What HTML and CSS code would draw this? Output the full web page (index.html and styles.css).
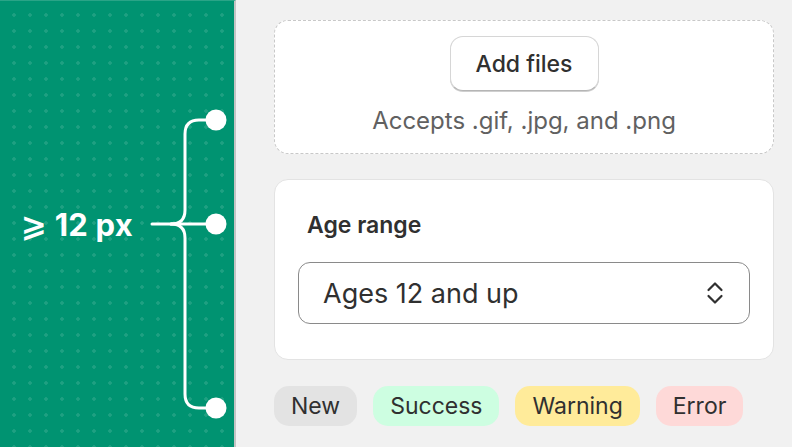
FILE: index.html
```html
<!DOCTYPE html>
<html lang="en">
<head>
  <meta charset="UTF-8" />
  <title>Spacing guide</title>
  <link rel="stylesheet" href="styles.css">
</head>
<body>
  <div class="guide">
    <div class="guide-label">⩾ 12 px</div>
    <svg class="brace" width="94" height="447" viewBox="0 0 94 447">
      <g fill="none" stroke="#fff" stroke-width="3" stroke-linecap="round">
        <path d="M12 224 H76" />
        <path d="M76 120 H59 Q45 120 45 134 V210 Q45 224 31 224" />
        <path d="M31 224 Q45 224 45 238 V394 Q45 408 59 408 H76" />
      </g>
      <g fill="#fff">
        <circle cx="76" cy="120" r="10.5" />
        <circle cx="76" cy="224" r="10.5" />
        <circle cx="76" cy="408" r="10.5" />
      </g>
    </svg>
  </div>

  <main class="preview">
    <div class="dropzone">
      <button class="btn">Add files</button>
      <p class="hint">Accepts .gif, .jpg, and .png</p>
    </div>

    <div class="card">
      <label class="field-label">Age range</label>
      <div class="select">
        <span>Ages 12 and up</span>
        <svg class="chevrons" width="20" height="28" viewBox="0 0 20 28">
          <path d="M3.5 11 L10 4.5 L16.5 11 M3.5 17 L10 23.5 L16.5 17" fill="none" stroke="#303030" stroke-width="2.2" stroke-linecap="round" stroke-linejoin="round" />
        </svg>
      </div>
    </div>

    <div class="badges">
      <span class="badge">New</span>
      <span class="badge success">Success</span>
      <span class="badge warning">Warning</span>
      <span class="badge error">Error</span>
    </div>
  </main>
</body>
</html>
```

FILE: styles.css
```css
body {
  margin: 0;
  font-family: 'Inter', 'DejaVu Sans', sans-serif;
  background: #f1f1f1;
  color: #303030;
  display: flex;
  height: 447px;
  overflow: hidden;
}

.guide {
  width: 236px;
  height: 447px;
  flex-shrink: 0;
  display: flex;
  align-items: center;
  background-color: #009371;
  background-image: radial-gradient(circle, rgba(255,255,255,0.12) 1.5px, transparent 2px);
  background-size: 16px 16px;
  background-position: 6px 6px;
  border-right: 2px solid #c4c4c4;
  border-top: 1px solid #2aa487;
  box-sizing: border-box;
}
.guide-label {
  width: 140px;
  flex-shrink: 0;
  padding-left: 21px;
  box-sizing: border-box;
  color: #fff;
  font-size: 31px;
  font-weight: 700;
  white-space: nowrap;
  letter-spacing: 0.2px;
}
.brace {
  flex-shrink: 0;
  margin-top: -1px;
}

.preview {
  flex: 1;
  padding: 20px 18px 0 38px;
}

.dropzone {
  height: 134px;
  box-sizing: border-box;
  background: #fff;
  border: 1px dashed #c8c8c8;
  border-radius: 14px;
  display: flex;
  flex-direction: column;
  align-items: center;
  padding-top: 15px;
}
.btn {
  width: 149px;
  height: 55px;
  font-family: inherit;
  font-size: 23px;
  font-weight: 450;
  color: #303030;
  background: #fff;
  border: 1px solid #d6d6d6;
  border-bottom-color: #b5b5b5;
  border-radius: 13px;
  box-shadow: 0 1px 0 #cfcfcf;
}
.hint {
  margin: 15px 0 0;
  font-size: 24px;
  color: #616161;
}

.card {
  margin-top: 25px;
  height: 181px;
  box-sizing: border-box;
  background: #fff;
  border: 1px solid #e3e3e3;
  border-radius: 14px;
  padding: 31px 23px 0 23px;
}
.field-label {
  display: block;
  margin-left: 9px;
  font-size: 23px;
  line-height: 28px;
  font-weight: 600;
}
.select {
  margin-top: 23px;
  height: 62px;
  box-sizing: border-box;
  border: 1px solid #8a8a8a;
  border-radius: 12px;
  display: flex;
  align-items: center;
  justify-content: space-between;
  padding: 0 24px 0 24px;
  font-size: 27px;
}

.badges {
  margin-top: 26px;
  display: flex;
  gap: 16px;
}
.badge {
  height: 40px;
  padding: 0 17px;
  display: flex;
  align-items: center;
  border-radius: 15px;
  background: #e3e3e3;
  font-size: 23px;
}
.badge.success { background: #cdfee1; }
.badge.warning { background: #ffeb9a; }
.badge.error { background: #fed9d8; }
```
